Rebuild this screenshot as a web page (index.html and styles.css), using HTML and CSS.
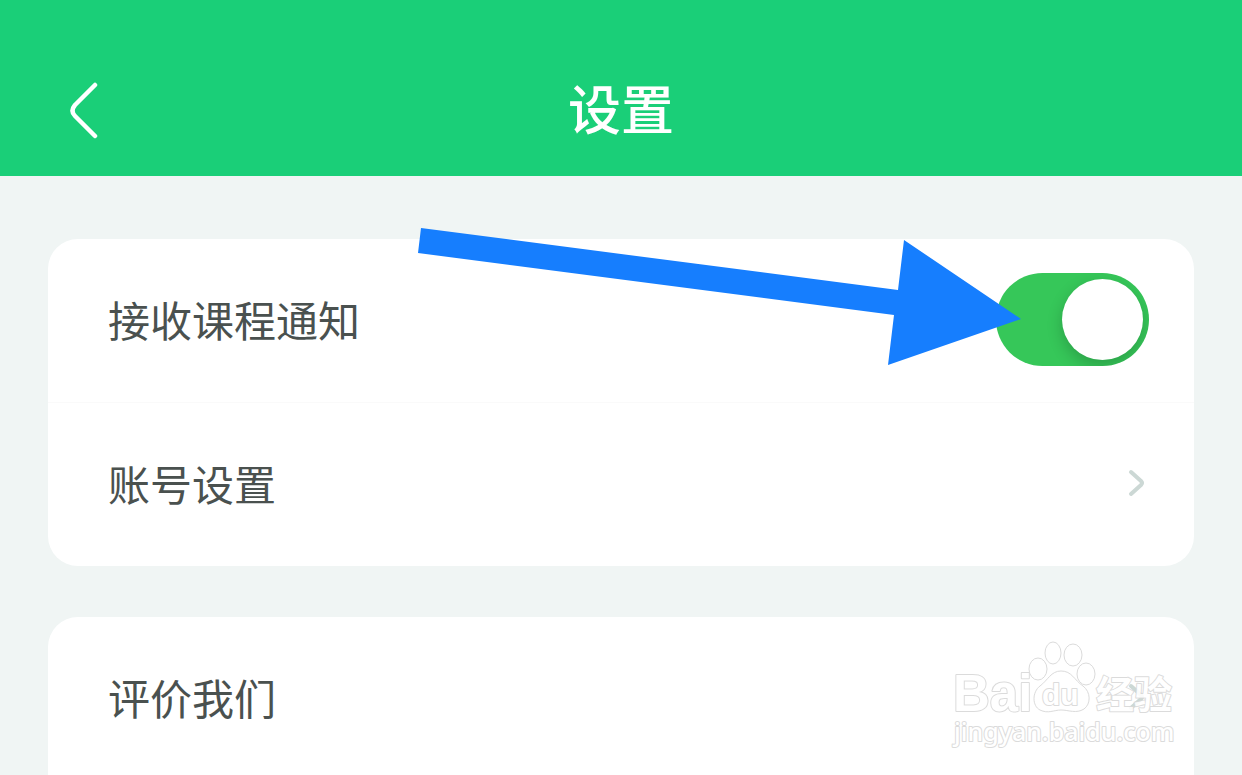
FILE: index.html
```html
<!DOCTYPE html>
<html lang="zh-CN">
<head>
<meta charset="utf-8">
<meta name="viewport" content="width=device-width, initial-scale=1">
<title>设置</title>
<link rel="stylesheet" href="styles.css">
</head>
<body>
<div class="page">
  <header class="header">
    <button class="back" type="button" aria-label="返回">
      <svg width="32" height="60" viewBox="0 0 32 60" fill="none" stroke="#fff" stroke-width="4.5" stroke-linecap="round" stroke-linejoin="round"><path d="M27 5 L7 25 Q2 31 7 36 L27 56"/></svg>
    </button>
    <h1 class="title">设置</h1>
  </header>
  <main class="content">
    <section class="card">
      <div class="row">
        <label class="label" for="notify">接收课程通知</label>
        <input class="switch" id="notify" type="checkbox" role="switch" checked>
        <svg class="arrow" width="603" height="137" viewBox="0 0 603 137" aria-hidden="true"><path fill="#167efe" d="M3 0 L480 62 L486 12 L603 91 L470 137 L476 87 L0 25 Z"/></svg>
      </div>
      <a class="row" href="#account">
        <span class="label">账号设置</span>
        <svg class="chevron" width="20" height="32" viewBox="0 0 20 32"><path d="M4 5 L14 14 Q16 16 14 18 L4 27"/></svg>
      </a>
    </section>
    <section class="card card-last">
      <a class="row" href="#rate">
        <span class="label">评价我们</span>
        <svg class="chevron" width="20" height="32" viewBox="0 0 20 32"><path d="M4 5 L14 14 Q16 16 14 18 L4 27"/></svg>
      </a>
    </section>
  </main>
  <svg class="watermark" width="250" height="130" viewBox="0 0 250 130">
    <text class="mark mark-latin" x="13" y="81">Bai</text>
    <ellipse cx="98" cy="39" rx="9" ry="11"/>
    <ellipse cx="113" cy="23" rx="8" ry="11"/>
    <ellipse cx="133" cy="25" rx="9" ry="11"/>
    <ellipse cx="146" cy="44" rx="9" ry="11"/>
    <path d="M121 41 C111 41 108 50 100 56 C92 62 92 76 100 80 C108 84 114 80 121 80 C129 80 136 84 144 79 C151 74 151 62 143 56 C134 50 132 41 121 41 Z"/>
    <text class="mark mark-du" x="102" y="75">du</text>
    <text class="mark mark-cjk" x="156" y="78">经验</text>
    <text class="mark mark-url" x="14" y="111">jingyan.baidu.com</text>
  </svg>
</div>
</body>
</html>
```
FILE: styles.css
```css
* {
  box-sizing: border-box;
}

body {
  margin: 0;
  background: #f0f5f4;
  color: #4a514f;
  font-family: "Noto Sans CJK SC", sans-serif;
}

.page {
  position: relative;
  display: flex;
  flex-direction: column;
  min-height: 100vh;
}

.header {
  display: grid;
  grid-template-columns: 1fr auto 1fr;
  align-items: center;
  padding: 64px 68px 20px;
  background: #1acf78;
  color: #fff;
}

.back {
  display: flex;
  justify-self: start;
  padding: 0;
  border: 0;
  background: none;
}

.title {
  margin: 0;
  padding-bottom: 6px;
  font-size: 53px;
  font-weight: 500;
  line-height: 86px;
}

.content {
  display: flex;
  flex: 1;
  flex-direction: column;
  gap: 51px;
  padding: 63px 48px 0;
}

.card {
  border-radius: 30px;
  background: #fff;
}

.card-last {
  flex: 1;
  border-radius: 30px 30px 0 0;
}

.row {
  position: relative;
  display: flex;
  align-items: center;
  justify-content: space-between;
  padding: 33px 45px 36px 60px;
  color: inherit;
  text-decoration: none;
}

.row + .row {
  border-top: 1px solid #fafafa;
}

.label {
  font-size: 42px;
  line-height: 94px;
}

.card-last .row {
  padding-bottom: 0;
}

.switch {
  display: flex;
  align-items: center;
  justify-content: flex-end;
  width: 153px;
  height: 93px;
  margin: 0;
  padding: 6px;
  border-radius: 47px;
  background: #36c759;
  appearance: none;
  overflow: hidden;
}

.switch::before {
  content: "";
  width: 81px;
  height: 81px;
  border-radius: 50%;
  background: #fff;
  box-shadow: 0 6px 16px rgb(0 0 0 / 20%);
}

.switch:not(:checked) {
  justify-content: flex-start;
  background: #e5e7e6;
}

.arrow {
  position: absolute;
  top: -11px;
  right: 173px;
  pointer-events: none;
}

.chevron {
  margin-right: 2px;
  fill: none;
  stroke: #ccd8d5;
  stroke-width: 4;
  stroke-linecap: round;
  stroke-linejoin: round;
}

.watermark {
  position: absolute;
  right: 52px;
  bottom: 15px;
  fill: #fff;
  stroke: #d8d8d8;
  stroke-width: 1;
  opacity: 0.9;
  pointer-events: none;
}

.mark {
  font-weight: 700;
  paint-order: stroke;
  stroke-width: 2;
  stroke-linejoin: round;
}

.mark-latin {
  font-family: "Liberation Sans", sans-serif;
  font-size: 51px;
}

.mark-du {
  font-family: "Liberation Sans", sans-serif;
  font-size: 30px;
}

.mark-cjk {
  font-size: 38px;
}

.mark-url {
  font-family: "Noto Sans", sans-serif;
  font-size: 25px;
  font-weight: 500;
}
```
